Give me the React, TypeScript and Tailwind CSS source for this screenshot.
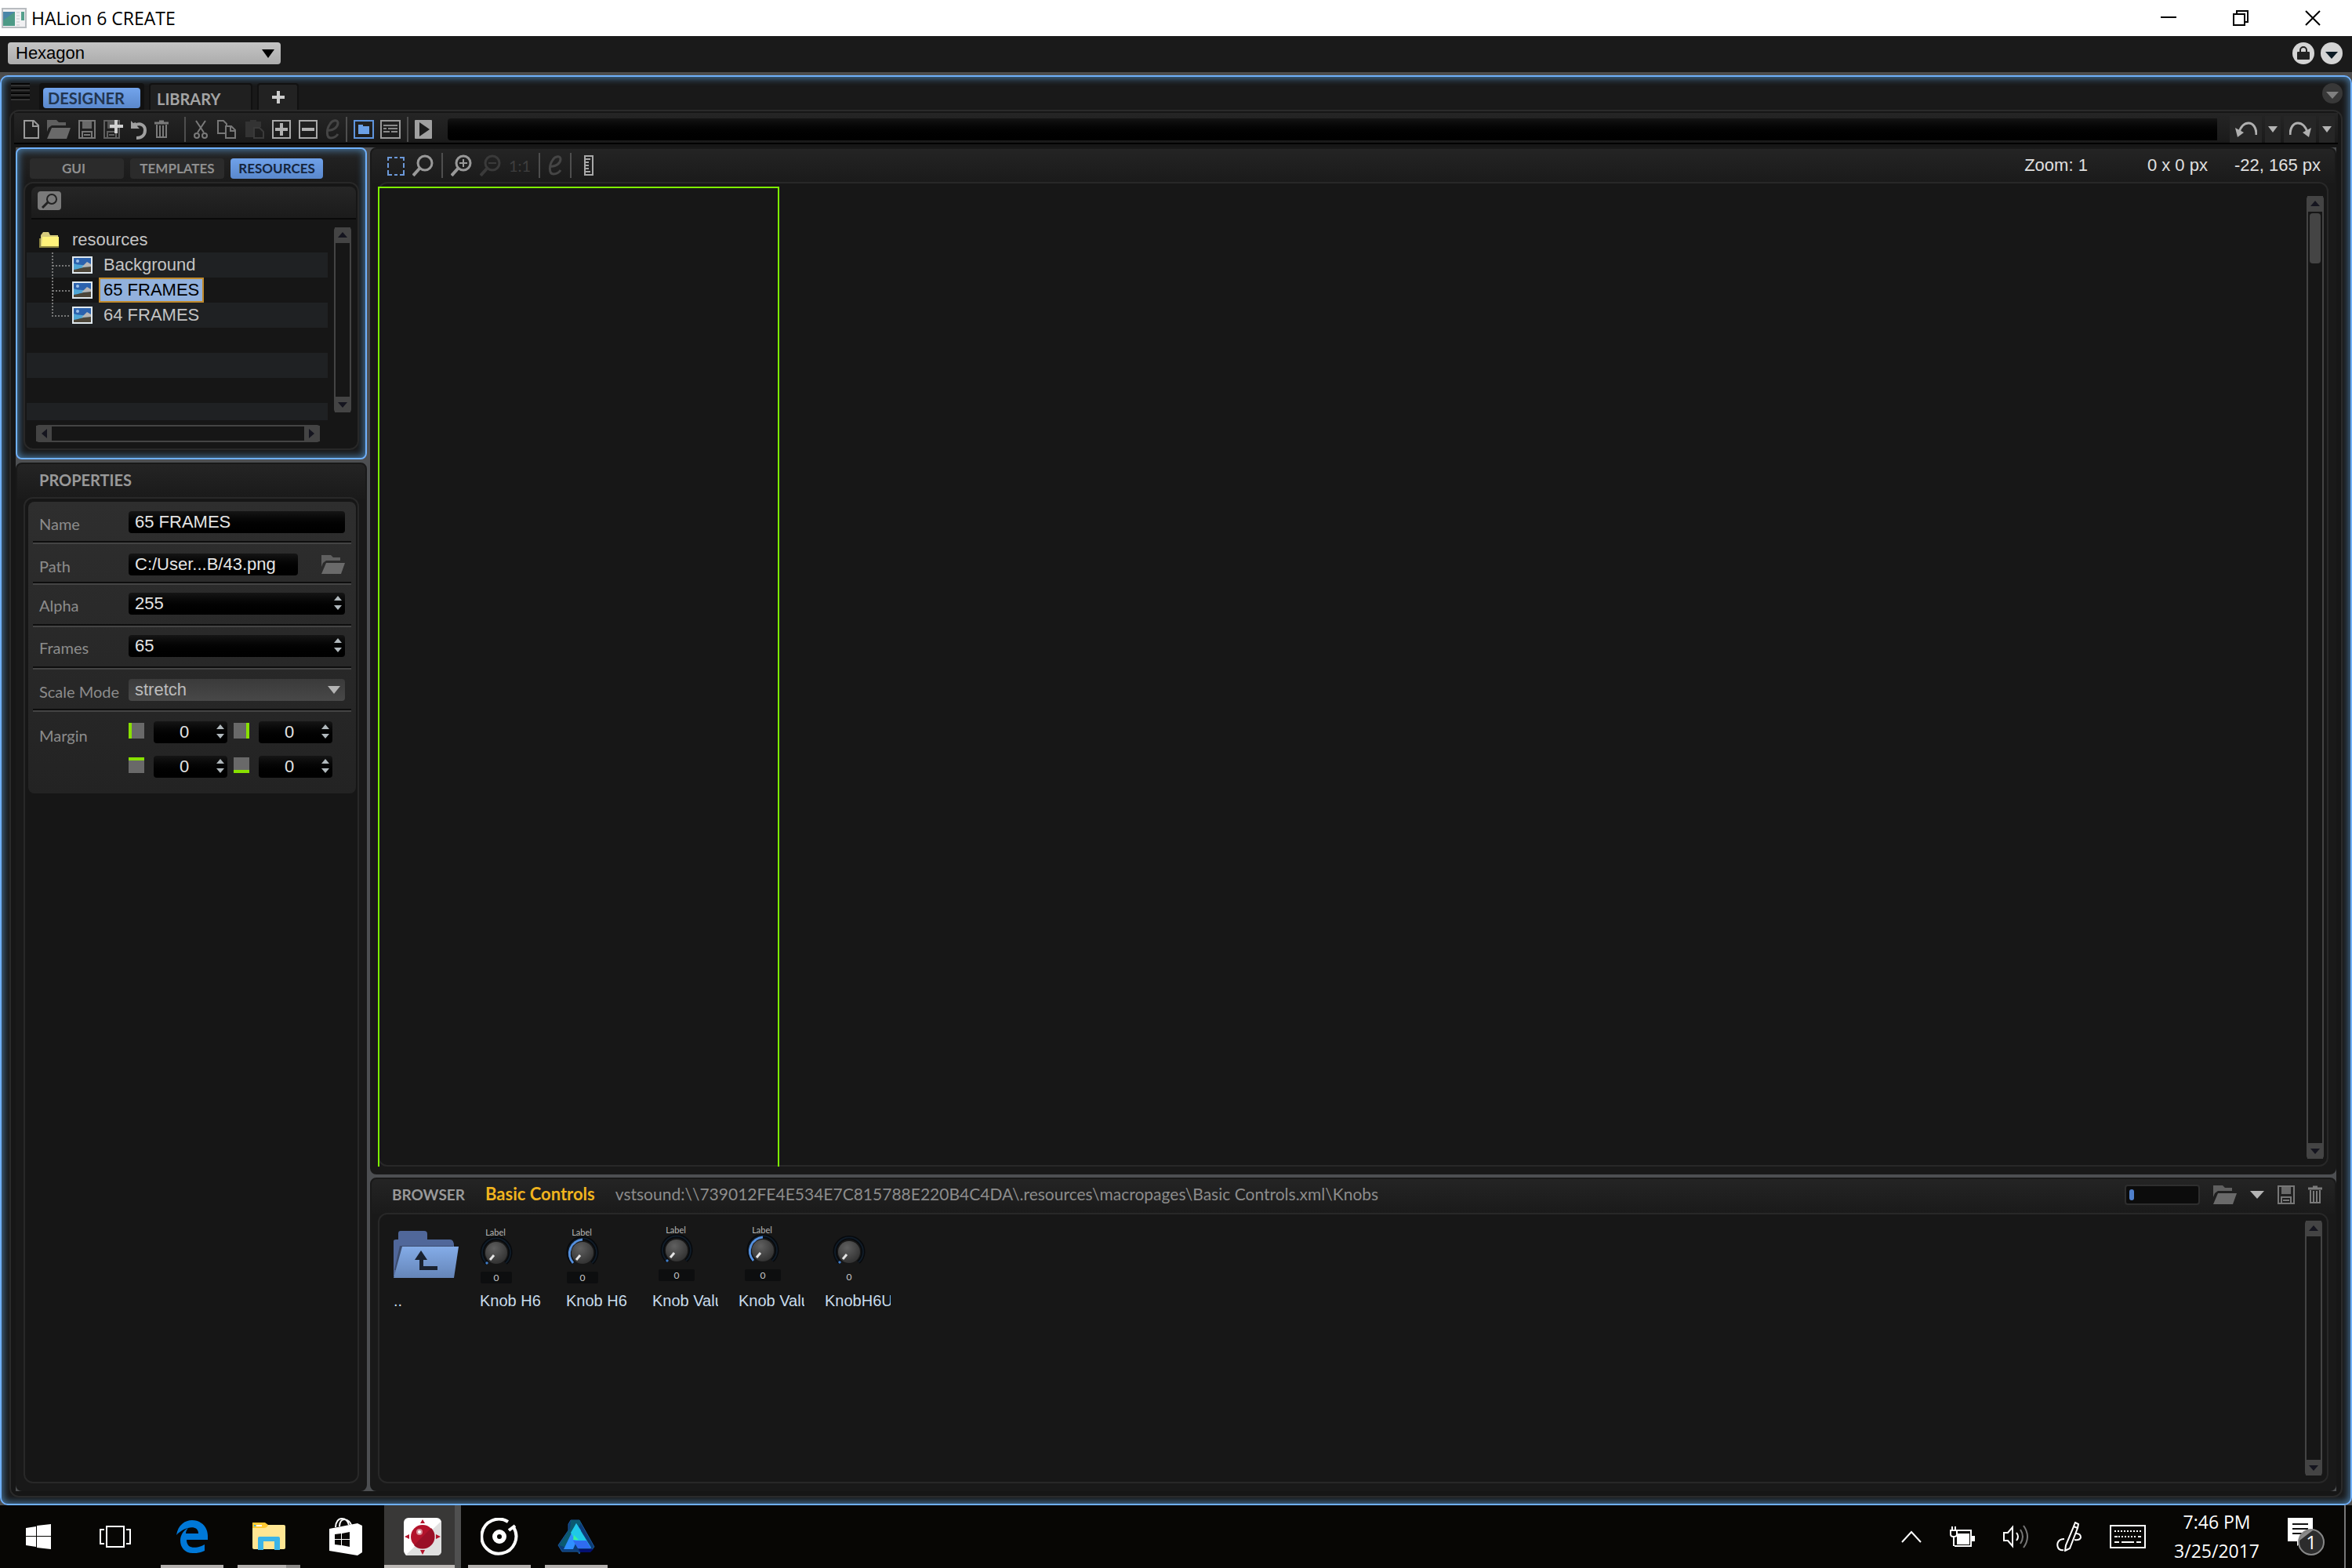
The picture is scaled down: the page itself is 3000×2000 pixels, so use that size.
import { useState } from 'react';
import type { ReactNode } from 'react';
import clsx from 'clsx';

const lato = "font-['Lato','Open_Sans',sans-serif]";
const arial = "font-['Liberation_Sans',Arial,sans-serif]";
const segoe = "font-['Open_Sans','Noto_Sans',sans-serif]";

/* ---------- Icons ---------- */

function Icon({ w, h, children, className }: { w: number; h: number; children: ReactNode; className?: string }) {
  return (
    <svg width={w} height={h} viewBox={`0 0 ${w} ${h}`} fill="none" className={clsx('shrink-0', className)} aria-hidden="true">
      {children}
    </svg>
  );
}

const NewIcon = () => (
  <Icon w={20} h={28}>
    <path d="M1 3H13L19 9V25H1Z" stroke="#9a9a9a" strokeWidth="2" />
    <path d="M12 3V10H19" stroke="#9a9a9a" strokeWidth="2" />
  </Icon>
);

const FolderIcon = () => (
  <Icon w={30} h={28}>
    <path d="M0 2H12L15 5H24V9H6L2 12L0 17Z" fill="#5f5f5f" />
    <path d="M6 12H30L25 26H0Z" fill="#6a6a6a" />
  </Icon>
);

const SaveIcon = () => (
  <Icon w={22} h={28}>
    <path d="M1 3H21V25H1Z" stroke="#777" strokeWidth="2" />
    <path d="M5 4H17V13H5Z" fill="#6a6a6a" />
    <path d="M5 24V17H17V24M7 21H15" stroke="#777" strokeWidth="2" />
  </Icon>
);

const SaveAsIcon = () => (
  <Icon w={25} h={28}>
    <path d="M1 3H20V25H1Z" stroke="#5f5f5f" strokeWidth="2" />
    <path d="M5 4H16V13H5Z" fill="#555" />
    <path d="M5 24V17H16V24M7 21H14" stroke="#5f5f5f" strokeWidth="2" />
    <path d="M16 2V19M8 10H25" stroke="#d0d0d0" strokeWidth="4" />
  </Icon>
);

const RevertIcon = () => (
  <Icon w={20} h={28}>
    <path d="M5 9C12 5 18 9 18 15C18 21 14 25 7 25" stroke="#a0a0a0" strokeWidth="4" />
    <path d="M0 3V13H11L8 10L6 5L3 6Z" fill="#a0a0a0" />
  </Icon>
);

const TrashIcon = () => (
  <Icon w={18} h={28}>
    <path d="M0 6H18M6 4H12" stroke="#7a7a7a" strokeWidth="3" />
    <path d="M3 8V24H15V8M7 9V23M11 9V23" stroke="#7a7a7a" strokeWidth="2" />
  </Icon>
);

const CutIcon = () => (
  <Icon w={18} h={28}>
    <path d="M3 3L13 18M15 3L5 18" stroke="#7a7a7a" strokeWidth="2" />
    <circle cx="4" cy="22" r="3" stroke="#7a7a7a" strokeWidth="2" />
    <circle cx="14" cy="22" r="3" stroke="#7a7a7a" strokeWidth="2" />
  </Icon>
);

const CopyIcon = () => (
  <Icon w={26} h={28}>
    <path d="M12 19H3V3H10L14 7V10" stroke="#777" strokeWidth="2" />
    <path d="M13 10H20L25 15V25H13Z" stroke="#777" strokeWidth="2" />
    <path d="M19 10V16H25" stroke="#777" strokeWidth="2" />
  </Icon>
);

const PasteIcon = () => (
  <Icon w={26} h={28}>
    <path d="M2 4H8V2H16V4H22V11H12V24H2Z" fill="#333" />
    <path d="M13 12H20L25 17V25H13Z" stroke="#3a3a3a" strokeWidth="2" />
  </Icon>
);

const PlusBoxIcon = () => (
  <Icon w={24} h={28}>
    <path d="M1 3H23V25H1Z" stroke="#a8a8a8" strokeWidth="2" />
    <path d="M12 6V22M4 14H20" stroke="#b0b0b0" strokeWidth="4" />
  </Icon>
);

const MinusBoxIcon = () => (
  <Icon w={24} h={28}>
    <path d="M1 3H23V25H1Z" stroke="#a8a8a8" strokeWidth="2" />
    <path d="M4 14H20" stroke="#b0b0b0" strokeWidth="4" />
  </Icon>
);

const EditIcon = () => (
  <Icon w={18} h={28}>
    <path d="M3 15C10 16 16 11 16 6C16 1 9 2 6 7C1 14 1 25 7 25C11 25 14 23 16 20" stroke="#454545" strokeWidth="3" />
  </Icon>
);

const FolderViewIcon = () => (
  <Icon w={26} h={28}>
    <path d="M1 3H25V25H1Z" stroke="#5f94dc" strokeWidth="2" />
    <path d="M6 8H12V10H20V20H6Z" fill="#6ba0e6" />
  </Icon>
);

const ListViewIcon = () => (
  <Icon w={26} h={28}>
    <path d="M1 3H25V25H1Z" stroke="#999" strokeWidth="2" />
    <path d="M4 9H22M4 13H8M10 13H22M4 17H12M14 17H22" stroke="#8a8a8a" strokeWidth="2" />
  </Icon>
);

const PlayIcon = () => (
  <Icon w={22} h={28}>
    <rect y="2" width="22" height="24" rx="1" fill="#a0a0a0" />
    <path d="M6 5L19 14L6 23Z" fill="#1c1c1c" />
  </Icon>
);

const SelectIcon = () => (
  <Icon w={22} h={30}>
    <path
      d="M1 9V5H6M9 5H13M16 5H21V9M21 12V18M21 21V27H16M13 27H9M6 27H1V21M1 18V12"
      stroke="#6b98d8"
      strokeWidth="2"
    />
  </Icon>
);

function LensIcon({ color, sign }: { color: string; sign?: string }) {
  return (
    <Icon w={27} h={30}>
      <circle cx="16" cy="12" r="9" stroke={color} strokeWidth="3" />
      <path d="M9 19L1 28" stroke={color} strokeWidth="4" />
      {sign && <path d={sign} stroke={color} strokeWidth="2" />}
    </Icon>
  );
}

const RulerIcon = () => (
  <Icon w={12} h={28}>
    <path d="M1 2H11V26H1Z" stroke="#a8a8a8" strokeWidth="2" />
    <path d="M2 6H8M2 10H6M2 14H6M2 18H6M2 22H8" stroke="#a8a8a8" strokeWidth="2" />
  </Icon>
);

function UndoIcon({ flip }: { flip?: boolean }) {
  return (
    <Icon w={28} h={20} className={flip ? '-scale-x-100' : undefined}>
      <path d="M5 14C7 6 12 2 17 2C23 2 27 8 27 17" stroke="#b0b0b0" strokeWidth="3" />
      <path d="M0 8L11 14L3 20Z" fill="#b0b0b0" />
    </Icon>
  );
}

const Down = ({ w, h, color }: { w: number; h: number; color: string }) => (
  <Icon w={w} h={h}>
    <path d={`M0 0H${w}L${w / 2} ${h}Z`} fill={color} />
  </Icon>
);

const TreeFolderIcon = () => (
  <Icon w={26} h={20}>
    <path d="M2 4L5 0H12L14 4H24V18H2Z" fill="#d6cb7c" />
    <path d="M4 6H25V18H3Z" fill="#fff27a" />
    <path d="M1 8V19H25" stroke="#8e8640" strokeWidth="2" />
  </Icon>
);

const PictureIcon = () => (
  <Icon w={26} h={22}>
    <rect width="26" height="22" fill="#dfe8ee" />
    <rect x="2" y="2" width="22" height="18" fill="#2c62ad" />
    <path d="M2 9C9 12 17 10 24 13V18H2Z" fill="#4fa6d6" />
    <path d="M2 17C10 16 14 13 24 13V20H2Z" fill="#4d4639" />
    <path d="M12 14L19 7L24 10V13Z" fill="#b9b6b4" />
    <circle cx="7" cy="6" r="2" fill="#9cc0e8" />
  </Icon>
);

const UpFolder = () => (
  <Icon w={84} h={84}>
    <defs>
      <linearGradient id="folder" x1="0" y1="0" x2="0" y2="1">
        <stop offset="0" stopColor="#84ace8" />
        <stop offset="1" stopColor="#6585b8" />
      </linearGradient>
    </defs>
    <path d="M0 20Q0 18 3 18H6V10Q6 7 9 7H39Q43 7 43 11V18H72Q77 18 77 26V31H10L1 65H0Z" fill="#50679a" />
    <path d="M8 26H76V31H12L4 57H1Z" fill="#3c4c6e" />
    <path d="M11 27H83L77 67H0Z" fill="url(#folder)" />
    <path d="M35 32L43 44H38V52H56V57H33V44H27Z" fill="#1a2230" />
  </Icon>
);

function Knob({ cx, cy, on, label, box }: { cx: number; cy: number; on?: boolean; label?: boolean; box?: [number, number] }) {
  return (
    <Icon w={84} h={84}>
      <defs>
        <radialGradient id="cap" cx="0.4" cy="0.3" r="0.8">
          <stop offset="0" stopColor="#606060" />
          <stop offset="1" stopColor="#2c2c2c" />
        </radialGradient>
      </defs>
      {label && (
        <text x={cx - 1} y={cy - 22} textAnchor="middle" fontSize="11" fill="#b8b8b8" className={lato}>
          Label
        </text>
      )}
      <path d={`M${cx - 12} ${cy + 13}A18 18 0 1 1 ${cx + 12} ${cy + 13}`} stroke="#07090c" strokeWidth="5" />
      <path d={`M${cx - 12} ${cy + 13}A18 18 0 1 1 ${cx + 12} ${cy + 13}`} stroke="#101c28" strokeWidth="2" />
      {on ? (
        <path d={`M${cx - 12} ${cy + 13}A18 18 0 0 1 ${cx} ${cy - 17}`} stroke="#5590de" strokeWidth="3" />
      ) : (
        <path d={`M${cx - 13} ${cy + 12}L${cx - 11} ${cy + 14}`} stroke="#3f7cc8" strokeWidth="3" />
      )}
      <circle cx={cx} cy={cy} r="14" fill="url(#cap)" />
      <path d={`M${cx - 3} ${cy + 3}L${cx - 8} ${cy + 9}`} stroke="#e4e4e4" strokeWidth="3" />
      {box && <rect x={box[0]} y={cy + 24} width={box[1]} height="15" rx="2" fill="#0d0e0f" />}
      <text x={cx} y={cy + 36} textAnchor="middle" fontSize="12" fill="#c8c8c8" className={lato}>
        0
      </text>
    </Icon>
  );
}

/* ---------- Building blocks ---------- */

function IconButton({ label, children }: { label: string; children: ReactNode }) {
  return (
    <button type="button" aria-label={label} title={label} className="flex shrink-0 items-center justify-center">
      {children}
    </button>
  );
}

const Divider = () => <div className="h-8 w-[2px] bg-[#4e4e4e]" />;

function Panel({ active, className, children }: { active?: boolean; className?: string; children: ReactNode }) {
  return (
    <section
      className={clsx(
        'flex min-h-0 flex-col rounded-lg border-2 bg-[#191919] bg-linear-to-b from-[#242424] to-[#1a1a1a] bg-[length:100%_44px] bg-no-repeat',
        active ? 'border-[#6fb0fb] shadow-[inset_0_0_10px_2px_#46749c]' : 'border-[#191919]',
        className,
      )}
    >
      {children}
    </section>
  );
}

function ScrollArrow({ dir, label }: { dir: 'up' | 'down' | 'left' | 'right'; label: string }) {
  const paths = {
    up: 'M4 13H16L10 6Z',
    down: 'M4 7H16L10 14Z',
    left: 'M14 4V16L7 10Z',
    right: 'M6 4V16L13 10Z',
  };
  return (
    <button type="button" aria-label={label} className="flex size-5 shrink-0 items-center justify-center bg-[#444]">
      <Icon w={20} h={20}>
        <path d={paths[dir]} fill="#15151f" />
      </Icon>
    </button>
  );
}

function VScroll({ thumb }: { thumb?: boolean }) {
  return (
    <div className="flex w-[22px] shrink-0 flex-col items-center rounded-sm border-x-2 border-[#444] bg-[#161616]">
      <ScrollArrow dir="up" label="Scroll up" />
      <div className="w-full flex-1 px-[2px] py-[2px]">{thumb && <div className="h-16 rounded-sm bg-[#444]" />}</div>
      <ScrollArrow dir="down" label="Scroll down" />
    </div>
  );
}

/* ---------- Left column ---------- */

const resources = ['Background', '65 FRAMES', '64 FRAMES'];

function TreeRow({ name, last, selected, onSelect }: { name: string; last: boolean; selected: boolean; onSelect: () => void }) {
  return (
    <li className="flex h-8 items-center odd:bg-[#1f2123]">
      <Icon w={58} h={32}>
        <path d={last ? 'M33 0V17H56' : 'M33 0V32M33 17H56'} stroke="#777" strokeWidth="2" strokeDasharray="2 2" />
      </Icon>
      <PictureIcon />
      <button
        type="button"
        onClick={onSelect}
        className={clsx(
          'ml-2 h-8 border-2 px-1 text-[22px] leading-7',
          selected ? 'border-[#c08a2c] bg-[#92b1dc] text-black' : 'border-transparent text-[#c4c4c4]',
        )}
      >
        {name}
      </button>
    </li>
  );
}

function ResourcesPanel() {
  const [selected, setSelected] = useState('65 FRAMES');
  return (
    <Panel active className="h-[398px] px-2 pt-3 pb-[10px]">
      <div className={clsx('flex gap-2 px-2 text-[17px] leading-[26px] font-bold', lato)}>
        <button type="button" className="w-[120px] rounded-sm bg-[#2b2b2b] pr-2 text-[#8f8f8f]">GUI</button>
        <button type="button" className="w-[120px] rounded-sm bg-[#2b2b2b] text-[#8f8f8f]">TEMPLATES</button>
        <button type="button" className="w-[118px] rounded-sm bg-linear-to-b from-[#6fa1e9] to-[#5a88cc] text-[#15253d]">
          RESOURCES
        </button>
      </div>
      <div className="mt-1 flex min-h-0 flex-1 flex-col rounded-xl border-2 border-[#282828] bg-[#161616] pt-1">
        <div className="mr-[2px] ml-2 flex h-[42px] shrink-0 items-center rounded-t-lg border-b-2 border-[#0a0a0a] bg-linear-to-b from-[#262626] to-[#1b1b1b] px-2 pb-1">
          <button type="button" aria-label="Find" className="flex h-6 w-[30px] items-center justify-center rounded-sm bg-[#7a7a7a]">
            <Icon w={22} h={20}>
              <circle cx="14" cy="8" r="6" stroke="#222" strokeWidth="2" />
              <path d="M9 12L2 19" stroke="#222" strokeWidth="3" />
            </Icon>
          </button>
        </div>
        <div className="mt-[10px] flex min-h-0 flex-1">
          <div className="flex min-w-0 flex-1 flex-col pl-[2px]">
            <div className="flex h-8 items-center gap-4 pl-4">
              <TreeFolderIcon />
              <span className="text-[22px] leading-7 text-[#c4c4c4]">resources</span>
            </div>
            <ul>
              {resources.map((name, i) => (
                <TreeRow
                  key={name}
                  name={name}
                  last={i === resources.length - 1}
                  selected={selected === name}
                  onSelect={() => setSelected(name)}
                />
              ))}
            </ul>
            <div className="mt-8 h-8 bg-[#1f2123]" />
            <div className="mt-8 h-[22px] bg-[#1f2123]" />
          </div>
          <div className="mr-2 ml-2 flex h-[236px]">
            <VScroll />
          </div>
        </div>
        <div className="mr-12 mb-2 ml-[14px] flex h-[22px] shrink-0 items-center rounded-sm border-y-2 border-[#444]">
          <ScrollArrow dir="left" label="Scroll left" />
          <div className="flex-1" />
          <ScrollArrow dir="right" label="Scroll right" />
        </div>
      </div>
    </Panel>
  );
}

const fieldStyle = 'h-7 rounded-sm bg-linear-to-b from-[#151515] to-black text-[22px] leading-7 text-[#e4e4e4] outline-none';

const Stepper = () => (
  <Icon w={10} h={18} className="pointer-events-none absolute top-1 right-1">
    <path d="M0 6L5 0L10 6ZM0 12H10L5 18Z" fill="#b0b8bc" />
  </Icon>
);

function PropertyRow({ id, label, className, children }: { id: string; label: string; className: string; children: ReactNode }) {
  return (
    <div className={clsx('mx-[6px] flex items-start border-b-2 border-[#444] px-2 shadow-[inset_0_-2px_0_#0e0e0e]', className)}>
      <label htmlFor={id} className={clsx('w-[114px] shrink-0 pt-[2px] text-[20px] leading-7 text-[#8c8c8c]', lato)}>
        {label}
      </label>
      {children}
    </div>
  );
}

function NumberField({ id, value }: { id: string; value: string }) {
  return (
    <div className="relative flex-1">
      <input id={id} defaultValue={value} className={clsx(fieldStyle, 'w-full px-2')} />
      <Stepper />
    </div>
  );
}

const margins = [
  { side: 'Left', edge: 'border-l-4' },
  { side: 'Right', edge: 'border-r-4' },
  { side: 'Top', edge: 'border-t-4' },
  { side: 'Bottom', edge: 'border-b-4' },
];

function PropertiesPanel() {
  return (
    <Panel className="flex-1 px-2 pb-2">
      <h2 className={clsx('h-[42px] pt-[6px] pl-5 text-[20px] leading-7 font-bold text-[#999]', lato)}>PROPERTIES</h2>
      <div className="flex-1 rounded-xl border-2 border-[#282828] bg-[#161616] py-1 pr-[2px] pl-1">
        <form className="h-[372px] rounded-lg bg-linear-to-b from-[#2e2e2e] to-[#232323]">
          <PropertyRow id="name" label="Name" className="h-[54px] pt-3">
            <input id="name" defaultValue="65 FRAMES" className={clsx(fieldStyle, 'w-full min-w-0 px-2')} />
          </PropertyRow>
          <PropertyRow id="path" label="Path" className="h-[52px] pt-3">
            <input id="path" defaultValue="C:/User...B/43.png" className={clsx(fieldStyle, 'mr-[30px] min-w-0 flex-1 px-2')} />
            <IconButton label="Browse">
              <FolderIcon />
            </IconButton>
          </PropertyRow>
          <PropertyRow id="alpha" label="Alpha" className="h-[54px] pt-[10px]">
            <NumberField id="alpha" value="255" />
          </PropertyRow>
          <PropertyRow id="frames" label="Frames" className="h-[54px] pt-[10px]">
            <NumberField id="frames" value="65" />
          </PropertyRow>
          <PropertyRow id="scale" label="Scale Mode" className="h-[54px] pt-3">
            <div className="relative flex-1">
              <select
                id="scale"
                defaultValue="stretch"
                className="h-7 w-full appearance-none rounded-sm bg-linear-to-b from-[#3a3a3a] to-[#484848] px-2 text-[22px] leading-7 text-[#bcbcbc] outline-none"
              >
                <option>stretch</option>
                <option>tile</option>
              </select>
              <span className="pointer-events-none absolute top-[9px] right-[6px]">
                <Down w={16} h={10} color="#b4b4b4" />
              </span>
            </div>
          </PropertyRow>
          <fieldset className="flex items-start px-[14px] pt-3">
            <legend className={clsx('float-left w-[114px] pt-1 text-[20px] leading-7 text-[#8c8c8c]', lato)}>Margin</legend>
            <div className="grid grid-cols-[126px_126px] gap-x-2 gap-y-4">
              {margins.map((m) => (
                <label key={m.side} className="flex gap-3" aria-label={`${m.side} margin`}>
                  <span className={clsx('mt-[2px] size-5 border-[#88e000] bg-[#696969]', m.edge)} />
                  <span className="relative">
                    <input defaultValue="0" className={clsx(fieldStyle, 'w-[94px] pr-4 text-center')} />
                    <Stepper />
                  </span>
                </label>
              ))}
            </div>
          </fieldset>
        </form>
      </div>
    </Panel>
  );
}

/* ---------- Right column ---------- */

function CanvasPanel() {
  return (
    <Panel className="flex-1 px-2 pb-2">
      <div className="flex h-[42px] shrink-0 items-center justify-between pr-[10px] pl-3">
        <div className="flex items-center gap-[10px]">
          <IconButton label="Select"><SelectIcon /></IconButton>
          <IconButton label="Zoom"><LensIcon color="#999" /></IconButton>
          <Divider />
          <IconButton label="Zoom in"><LensIcon color="#999" sign="M16 7V17M11 12H21" /></IconButton>
          <IconButton label="Zoom out"><LensIcon color="#3a3a3a" sign="M11 12H21" /></IconButton>
          <button type="button" className={clsx('text-[20px] text-[#3e3e3e]', lato)}>1:1</button>
          <Divider />
          <IconButton label="Edit"><EditIcon /></IconButton>
          <div className="flex items-center gap-4">
            <Divider />
            <IconButton label="Ruler"><RulerIcon /></IconButton>
          </div>
        </div>
        <div className="flex text-[22px] leading-7 text-[#e0e0e0]">
          <span className="mr-[76px]">Zoom: 1</span>
          <span className="mr-[34px]">0 x 0 px</span>
          <span>-22, 165 px</span>
        </div>
      </div>
      <div className="relative flex flex-1 justify-end rounded-xl border-2 border-[#282828] bg-[#171717] pt-4 pr-1 pb-2">
        <div className="absolute top-1 -bottom-[2px] -left-[2px] w-[512px] border-2 border-b-0 border-[#7df000]" />
        <VScroll thumb />
      </div>
    </Panel>
  );
}

const knobs = [
  { name: 'Knob H6', icon: <Knob cx={21} cy={35} label box={[1, 40]} /> },
  { name: 'Knob H6', icon: <Knob cx={21} cy={35} on label box={[1, 40]} /> },
  { name: 'Knob Value', icon: <Knob cx={31} cy={32} label box={[8, 46]} /> },
  { name: 'Knob Value', icon: <Knob cx={31} cy={32} on label box={[8, 46]} /> },
  { name: 'KnobH6Uni', icon: <Knob cx={31} cy={34} /> },
];

function BrowserPanel() {
  return (
    <Panel className="h-[400px] px-2 pb-2">
      <div className="flex h-[43px] shrink-0 items-center justify-between pr-2 pl-[18px] pb-1">
        <div className={clsx('flex items-baseline gap-[26px] text-[21px] leading-7', lato)}>
          <h2 className="text-[19px] font-bold text-[#999]">BROWSER</h2>
          <span className="text-[22px] font-bold text-[#f0b41e]">Basic Controls</span>
          <span className="text-[#8c8c8c]">
            vstsound:\\739012FE4E534E7C815788E220B4C4DA\.resources\macropages\Basic Controls.xml\Knobs
          </span>
        </div>
        <div className="flex items-center gap-[17px]">
          <div className="h-[26px] w-24 rounded-sm border-2 border-[#2e2e2e] bg-[#0c0c0c] p-1">
            <div className="h-[14px] w-[6px] rounded-sm bg-[#5080cc]" />
          </div>
          <IconButton label="Open"><FolderIcon /></IconButton>
          <IconButton label="Presets"><Down w={18} h={10} color="#b4b4b4" /></IconButton>
          <IconButton label="Save"><SaveIcon /></IconButton>
          <IconButton label="Delete"><TrashIcon /></IconButton>
        </div>
      </div>
      <div className="flex flex-1 justify-between rounded-xl border-2 border-[#282828] bg-[#171717] pt-2 pr-[6px] pb-2 pl-[18px]">
        <ul className="mt-[6px] flex gap-[26px] text-[20px] leading-6 text-[#c8dcec]">
          <li className="w-[84px]">
            <UpFolder />
            <p>..</p>
          </li>
          {knobs.map((k, i) => (
            <li key={i} className="w-[84px]">
              {k.icon}
              <p className="overflow-hidden whitespace-nowrap">{k.name}</p>
            </li>
          ))}
        </ul>
        <VScroll />
      </div>
    </Panel>
  );
}

/* ---------- Window ---------- */

function TitleBar() {
  return (
    <header className="flex h-[46px] shrink-0 items-stretch justify-between bg-white pr-1 pl-[2px] text-black">
      <div className="flex items-center gap-[6px]">
        <Icon w={32} h={26}>
          <rect x="1" y="1" width="30" height="24" fill="#f0f0f2" stroke="#b8bcc0" strokeWidth="2" />
          <rect x="2" y="5" width="15" height="18" fill="#4d9a86" />
          <path d="M2 5H17L2 16Z" fill="#4a86a8" />
          <path d="M19 6H23M19 10H23M19 14H23M19 18H23M19 22H23" stroke="#c4c8cc" strokeWidth="1" />
          <rect x="25" y="5" width="4" height="11" fill="#55a08c" />
        </Icon>
        <h1 className={clsx('text-[23px] leading-8', segoe)}>HALion 6 CREATE</h1>
      </div>
      <div className="flex [&>button]:w-[92px]">
        <IconButton label="Minimize">
          <Icon w={20} h={20}><path d="M0 9H20" stroke="#000" strokeWidth="2" /></Icon>
        </IconButton>
        <IconButton label="Restore">
          <Icon w={20} h={20}><path d="M1 5H15V19H1ZM5 4V1H19V15H16" stroke="#000" strokeWidth="2" /></Icon>
        </IconButton>
        <IconButton label="Close">
          <Icon w={20} h={20}><path d="M1 1L19 19M19 1L1 19" stroke="#000" strokeWidth="2" /></Icon>
        </IconButton>
      </div>
    </header>
  );
}

function ProgramBar() {
  return (
    <div className="flex h-[46px] shrink-0 items-center justify-between bg-[#1a1a1a] pr-3 pl-[10px] pb-[2px]">
      <div className="relative">
        <select
          aria-label="Program"
          defaultValue="Hexagon"
          className="h-7 w-[348px] appearance-none rounded-sm bg-linear-to-b from-[#c4c4c4] to-[#acacac] px-[10px] text-[22px] leading-7 text-black outline-none"
        >
          <option>Hexagon</option>
        </select>
        <span className="pointer-events-none absolute top-[9px] right-[8px]">
          <Down w={16} h={11} color="#000" />
        </span>
      </div>
      <div className="flex gap-2">
        <IconButton label="Lock">
          <Icon w={28} h={28}>
            <circle cx="14" cy="14" r="14" fill="#d4d4d4" />
            <rect x="6" y="12" width="16" height="10" rx="1" fill="#222" />
            <path d="M10 13V10A4 4 0 0 1 18 10V13" stroke="#222" strokeWidth="2" />
          </Icon>
        </IconButton>
        <IconButton label="Options">
          <Icon w={28} h={28}>
            <circle cx="14" cy="14" r="14" fill="#d4d4d4" />
            <path d="M6 12H22L14 21Z" fill="#0c1a24" />
          </Icon>
        </IconButton>
      </div>
    </div>
  );
}

function PageTabs() {
  return (
    <div className="flex h-[42px] shrink-0 items-end justify-between">
      <div className="flex items-end">
        <Icon w={24} h={34} className="mr-3 ml-[2px] self-end">
          <path d="M0 1H24M0 7H24M0 13H24M0 19H24" stroke="#050505" strokeWidth="2" />
          <path d="M0 3H24M0 9H24M0 15H24M0 21H24" stroke="#333" strokeWidth="2" />
        </Icon>
        <div className={clsx('flex gap-[6px] text-[20px] leading-[26px] font-bold', lato)}>
          <button type="button" className="h-[34px] w-[134px] rounded-t bg-[#111] px-[5px] pt-1 text-left">
            <span className="block h-[26px] rounded-sm bg-linear-to-b from-[#72a4ec] to-[#5a88cc] px-[6px] text-[#22354f]">DESIGNER</span>
          </button>
          <button type="button" className="h-[34px] w-[132px] rounded-t border-2 border-b-0 border-[#111] bg-[#202020] px-2 pt-1 text-left text-[#a4a4a4]">
            LIBRARY
          </button>
          <button type="button" aria-label="Add page" className="flex h-[34px] w-[53px] items-center justify-center rounded-t border-2 border-b-0 border-[#111] bg-[#222]">
            <Icon w={16} h={16}><path d="M8 0V16M0 8H16" stroke="#ccc" strokeWidth="4" /></Icon>
          </button>
        </div>
      </div>
      <div className="self-center">
        <IconButton label="Page menu">
          <Icon w={26} h={26}>
            <circle cx="13" cy="13" r="13" fill="#383838" />
            <path d="M5 11H21L13 20Z" fill="#808080" />
          </Icon>
        </IconButton>
      </div>
    </div>
  );
}

function Toolbar() {
  return (
    <div className="mx-1 mt-[2px] flex h-10 shrink-0 items-center border-b-2 border-black bg-linear-to-b from-[#252525] to-[#1a1a1a] pt-1 pl-3">
      <div className="flex items-center gap-[10px]">
        <IconButton label="New"><NewIcon /></IconButton>
        <IconButton label="Open"><FolderIcon /></IconButton>
        <IconButton label="Save"><SaveIcon /></IconButton>
        <IconButton label="Save as"><SaveAsIcon /></IconButton>
        <IconButton label="Revert"><RevertIcon /></IconButton>
        <IconButton label="Delete"><TrashIcon /></IconButton>
      </div>
      <div className="ml-5 flex items-center gap-[10px]">
        <Divider />
        <IconButton label="Cut"><CutIcon /></IconButton>
        <IconButton label="Copy"><CopyIcon /></IconButton>
        <IconButton label="Paste"><PasteIcon /></IconButton>
        <IconButton label="Add"><PlusBoxIcon /></IconButton>
        <IconButton label="Remove"><MinusBoxIcon /></IconButton>
        <IconButton label="Edit"><EditIcon /></IconButton>
      </div>
      <div className="ml-2 flex items-center gap-2">
        <Divider />
        <IconButton label="Browser view"><FolderViewIcon /></IconButton>
        <IconButton label="Message view"><ListViewIcon /></IconButton>
        <Divider />
        <IconButton label="Test"><PlayIcon /></IconButton>
      </div>
      <div className="mr-4 ml-5 h-7 flex-1 rounded-l-sm bg-linear-to-b from-[#141414] to-black" />
      <div className="flex h-full gap-1 pr-1 [&>button]:bg-[#262626]">
        <button type="button" aria-label="Undo" className="flex w-[41px] items-center justify-center"><UndoIcon /></button>
        <button type="button" aria-label="Undo history" className="flex w-5 items-center justify-center"><Down w={12} h={8} color="#b4b4b4" /></button>
        <button type="button" aria-label="Redo" className="flex w-[41px] items-center justify-center"><UndoIcon flip /></button>
        <button type="button" aria-label="Redo history" className="flex w-5 items-center justify-center"><Down w={12} h={8} color="#b4b4b4" /></button>
      </div>
    </div>
  );
}

/* ---------- Taskbar ---------- */

const apps = [
  {
    name: 'Start',
    icon: (
      <Icon w={32} h={32}>
        <path d="M0 5L13 3V15H0ZM14 2L32 0V15H14ZM0 16H13V29L0 27ZM14 16H32V32L14 30Z" fill="#fff" />
      </Icon>
    ),
  },
  {
    name: 'Task view',
    icon: (
      <Icon w={40} h={28}>
        <path d="M9 1H31V27H9ZM6 5H1V23H6M34 5H39V23H34" stroke="#fff" strokeWidth="2" />
      </Icon>
    ),
  },
  {
    name: 'Edge',
    bar: 'bg-[#b4b0ae]',
    icon: (
      <Icon w={40} h={42}>
        <path
          d="M0 19C2 6 11 0 20 0C32 0 40 9 40 20V25H13C13 38 27 36 36 31V39C30 42 25 42 21 42C10 42 5 34 5 26C5 19 9 13 15 10C13 12 12 15 12 17H28C28 5 10 8 0 19Z"
          fill="#0078d7"
        />
      </Icon>
    ),
  },
  {
    name: 'File Explorer',
    bar: 'bg-linear-to-r from-[#b4b0ae] from-78% to-[#8a8886] to-78%',
    icon: (
      <Icon w={42} h={36}>
        <path d="M0 3H40Q42 3 42 5V32Q42 34 40 34H2Q0 34 0 32Z" fill="#ffe693" />
        <path d="M0 0H16L20 3Q19 7 14 7H0Z" fill="#ffc933" />
        <path d="M5 4H12" stroke="#fff" strokeWidth="2" />
        <path d="M2 4H4" stroke="#3ab4e8" strokeWidth="2" />
        <path d="M7 35V20Q7 18 9 18H33Q35 18 35 20V35H28V24H14V35Z" fill="#3ab4e8" />
      </Icon>
    ),
  },
  {
    name: 'Store',
    icon: (
      <Icon w={42} h={48}>
        <path d="M0 14L36 7L42 10V44L36 48L0 42Z" fill="#fff" />
        <path d="M8 12C8 5 12 1 16 1C21 1 24 5 25 9M13 11C13 5 16 2 19 2C24 2 27 6 28 9" stroke="#fff" strokeWidth="2" />
        <path d="M7 21L15 20V27H7ZM16 20L26 18V27H16ZM7 28H15V35L7 34ZM16 28H26V37L16 35Z" fill="#0a0806" />
      </Icon>
    ),
  },
  {
    name: 'HALion 6',
    active: true,
    bar: 'bg-[#bcb8b5]',
    icon: (
      <Icon w={48} h={48}>
        <rect width="48" height="48" rx="6" fill="#fff" />
        <path d="M48 4V42Q48 48 42 48H2Z" fill="#e0e0e0" />
        <circle cx="24" cy="24" r="15" fill="#b3132b" />
        <path d="M35 13A15 15 0 0 1 13 35Z" fill="#9a1027" />
        <path d="M24 2L27 7H21ZM24 47L27 41H21ZM1 24L7 21V27ZM47 24L41 21V27Z" fill="#b3132b" />
        <circle cx="20" cy="18" r="4" fill="#d88a94" />
        <circle cx="20" cy="18" r="2" fill="#fff" />
      </Icon>
    ),
  },
  {
    name: 'Groove Music',
    bar: 'bg-[#b4b0ae]',
    icon: (
      <Icon w={48} h={48}>
        <path d="M35 5A22 22 0 1 0 42 12" stroke="#fff" strokeWidth="4" />
        <path d="M36 16L44 10" stroke="#fff" strokeWidth="4" />
        <circle cx="24" cy="24" r="6" stroke="#fff" strokeWidth="6" />
      </Icon>
    ),
  },
  {
    name: 'Affinity Designer',
    bar: 'bg-[#b4b0ae]',
    icon: (
      <Icon w={48} h={44}>
        <path d="M17 1H28L47 35L42 41H29L28 44L26 41H6L1 33L14 14V6Z" fill="#0c3c78" stroke="#1b5aa0" strokeWidth="1" />
        <path d="M17 1H28L30 5L12 36L2 33L16 12Z" fill="#0b5a70" />
        <path d="M24 5L8 38H20L30 14Z" fill="#2f8fff" />
        <path d="M24 5L43 36H28L17 17Z" fill="#1fc8e8" />
        <path d="M21 20L27 26H20Z" fill="#39f0a0" />
        <path d="M20 27H37L43 37H26Z" fill="#2f6cf0" />
        <path d="M27 38H46L42 42H29Z" fill="#041070" />
      </Icon>
    ),
  },
];

function Taskbar() {
  return (
    <footer className="flex h-20 shrink-0 items-stretch justify-between bg-[#070604]">
      <nav className="flex" aria-label="Taskbar">
        {apps.map((app) => (
          <button
            key={app.name}
            type="button"
            aria-label={app.name}
            className={clsx('relative flex w-[98px] items-center justify-center', app.active && 'border-r-8 border-[#505050] bg-[#393837] bg-clip-padding')}
          >
            <span className={clsx(app.active && 'pl-2')}>{app.icon}</span>
            {app.bar && <span className={clsx('absolute bottom-0 h-1', app.active ? 'inset-x-0' : 'w-20', app.bar)} />}
          </button>
        ))}
      </nav>
      <div className="flex items-center gap-9">
        <IconButton label="Show hidden icons">
          <Icon w={26} h={16}><path d="M1 15L13 2L25 15" stroke="#fff" strokeWidth="2" /></Icon>
        </IconButton>
        <IconButton label="Battery">
          <Icon w={32} h={26}>
            <path d="M10 5H27V25H6" stroke="#fff" strokeWidth="2" />
            <path d="M9 9H25V23H9Z" fill="#fff" />
            <path d="M28 12H32V19H28Z" fill="#fff" />
            <path d="M1 5H9V10Q9 13 5 13Q1 13 1 10ZM3 0V5M7 0V5M5 13V25" stroke="#fff" strokeWidth="2" />
          </Icon>
        </IconButton>
        <IconButton label="Volume">
          <Icon w={32} h={32}>
            <path d="M1 11H6L12 4V28L6 21H1Z" stroke="#fff" strokeWidth="2" />
            <path d="M17 11Q21 16 17 21" stroke="#fff" strokeWidth="2" />
            <path d="M22 7Q28 16 22 25M26 2Q36 16 26 30" stroke="#777" strokeWidth="2" />
          </Icon>
        </IconButton>
        <IconButton label="Pen">
          <Icon w={32} h={38}>
            <path d="M22 6L27 8L17 34L11 37L12 30ZM22 6L24 1L28 3L27 8" stroke="#fff" strokeWidth="2" />
            <path d="M10 22C2 22 0 28 2 33Q4 37 9 36M25 15Q31 15 31 20Q30 24 23 23" stroke="#fff" strokeWidth="2" />
          </Icon>
        </IconButton>
        <IconButton label="Keyboard">
          <Icon w={46} h={32}>
            <path d="M1 2H45V30H1Z" stroke="#fff" strokeWidth="2" />
            <path d="M6 9H41M11 16H35" stroke="#fff" strokeWidth="2" strokeDasharray="2 2" />
            <path d="M6 16H10M36 16H40M6 23H12M15 23H31M34 23H40" stroke="#fff" strokeWidth="2" />
          </Icon>
        </IconButton>
        <div className={clsx('text-center text-[23px] leading-[37px] text-white', segoe)}>
          <p>7:46 PM</p>
          <p>3/25/2017</p>
        </div>
        <IconButton label="1 notification">
          <Icon w={48} h={50}>
            <path d="M0 1H32V31H18L12 37V31H0Z" fill="#fff" />
            <path d="M6 9H26M6 15H26M6 21H20" stroke="#111" strokeWidth="2" />
            <circle cx="30" cy="32" r="16" fill="#2c2c2c" stroke="#888" strokeWidth="2" />
            <path d="M15 30A15 15 0 0 1 32 17Z" fill="#8a8a8a" />
            <text x="30" y="41" textAnchor="middle" fontSize="24" fill="#fff" className={segoe}>1</text>
          </Icon>
        </IconButton>
        <div className="-ml-3 h-full w-[10px] border-l-2 border-[#777]" />
      </div>
    </footer>
  );
}

export default function App() {
  return (
    <div className={clsx('flex h-screen flex-col overflow-hidden bg-[#4d4d4d]', arial)}>
      <TitleBar />
      <ProgramBar />
      <main className="mt-1 flex min-h-0 flex-1 flex-col rounded-[10px] border-2 border-[#6fb0fb] bg-[#191919] px-[10px] pb-2 shadow-[inset_0_0_10px_2px_#46749c]">
        <PageTabs />
        <div className="flex min-h-0 flex-1 flex-col rounded-xl border-2 border-[#2a2a2a] bg-[#161616]">
          <Toolbar />
          <div className="mx-[6px] mt-1 mb-[6px] flex min-h-0 flex-1 gap-1 bg-[#4d4f52]">
            <div className="flex w-[448px] shrink-0 flex-col gap-1">
              <ResourcesPanel />
              <PropertiesPanel />
            </div>
            <div className="flex min-w-0 flex-1 flex-col gap-1">
              <CanvasPanel />
              <BrowserPanel />
            </div>
          </div>
        </div>
      </main>
      <Taskbar />
    </div>
  );
}
